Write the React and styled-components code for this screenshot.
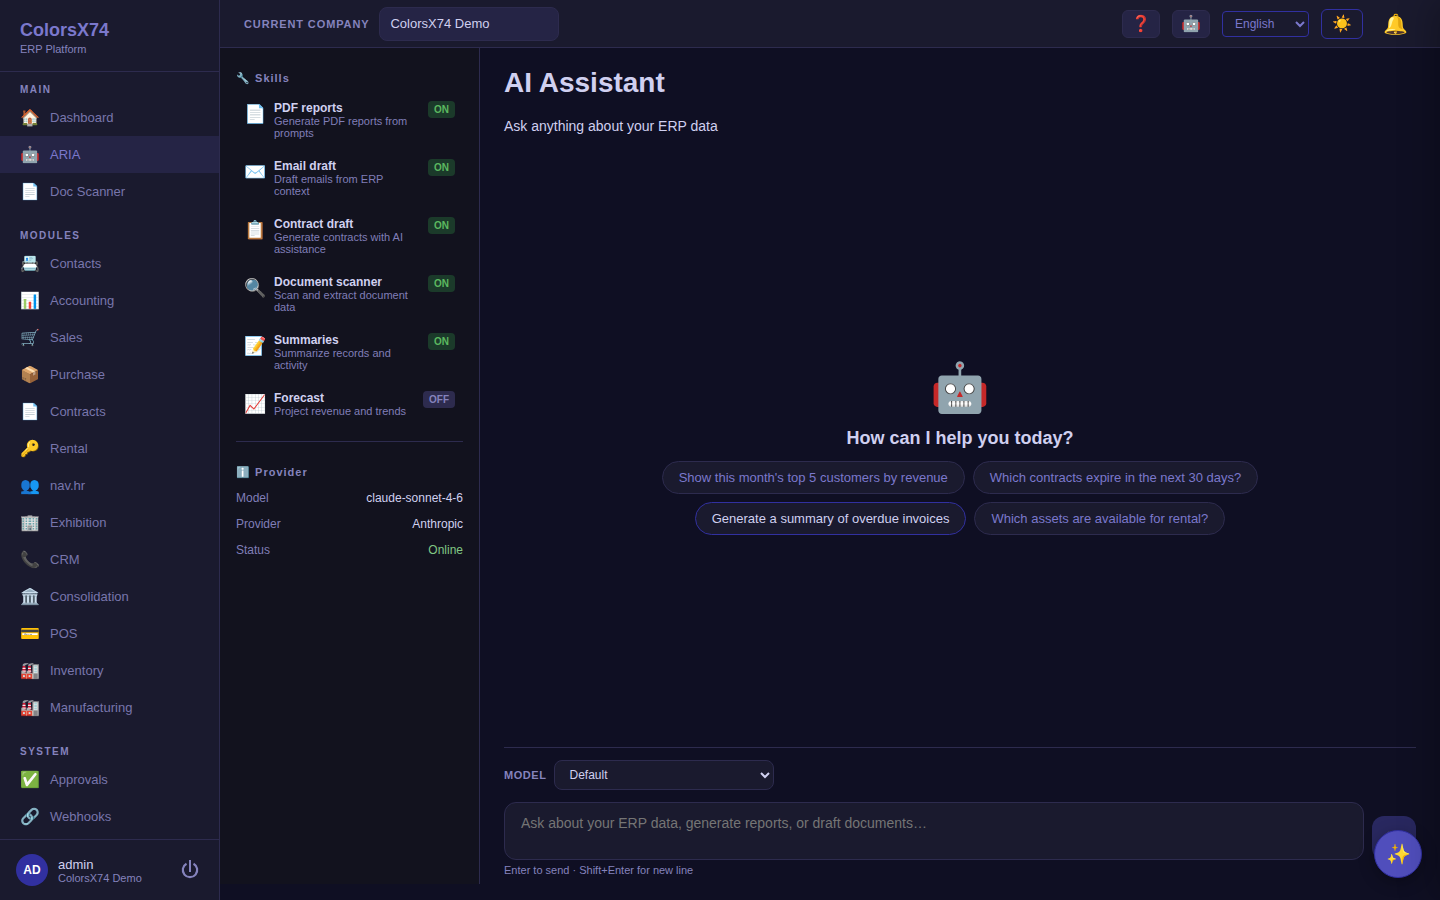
import React, { useState } from 'react';
import styled, { createGlobalStyle } from 'styled-components';
import { SendHorizontal } from 'lucide-react';

const GlobalStyle = createGlobalStyle`
  * {
    box-sizing: border-box;
  }

  body {
    margin: 0;
    background: #0f0f23;
    color: #d0d0f0;
    font-family: 'Liberation Sans', Arial, sans-serif;
    font-size: 14px;
    overflow: hidden;
  }

  button,
  select,
  input,
  textarea {
    font-family: inherit;
  }
`;

const Shell = styled.div`
  display: flex;
  height: 100vh;
  overflow: hidden;
`;

const Sidebar = styled.aside`
  width: 220px;
  flex-shrink: 0;
  display: flex;
  flex-direction: column;
  background: #1a1a2e;
  border-right: 1px solid #2d2b4e;
`;

const Brand = styled.div`
  padding: 20px 20px 16px;
  border-bottom: 1px solid #2d2b4e;
`;

const BrandName = styled.div`
  font-size: 18px;
  line-height: 20px;
  font-weight: 700;
  color: #7b78cc;
`;

const BrandSub = styled.div`
  margin-top: 3px;
  font-size: 11px;
  line-height: 12px;
  color: #8583bd;
`;

const Nav = styled.nav`
  flex: 1;
  min-height: 0;
  overflow: hidden;
`;

const NavGroup = styled.div`
  padding: 12px 0 8px;
`;

const NavHeading = styled.h2`
  margin: 0;
  padding: 0 20px 4px;
  font-size: 10px;
  line-height: 11px;
  font-weight: 700;
  letter-spacing: 0.15em;
  text-transform: uppercase;
  color: #8583bd;
`;

const NavItem = styled.a`
  display: flex;
  align-items: center;
  gap: 10px;
  height: 37px;
  padding: 0 20px;
  font-size: 13px;
  text-decoration: none;
  color: ${props => (props.$active ? '#7b78cc' : '#7876ac')};
  background: ${props => (props.$active ? '#252445' : 'transparent')};
`;

const NavIcon = styled.span`
  width: 20px;
  font-size: 16px;
  text-align: center;
`;

const Account = styled.div`
  display: flex;
  align-items: center;
  gap: 10px;
  height: 61px;
  padding: 0 16px;
  border-top: 1px solid #2d2b4e;
`;

const Avatar = styled.div`
  display: flex;
  align-items: center;
  justify-content: center;
  width: 32px;
  height: 32px;
  border-radius: 50%;
  background: #3130a0;
  color: #fff;
  font-size: 12px;
  font-weight: 700;
`;

const AccountText = styled.div`
  flex: 1;
  font-size: 13px;
  line-height: 15px;
`;

const AccountCompany = styled.div`
  font-size: 11px;
  line-height: 12px;
  color: #8583bd;
`;

const PowerButton = styled.button`
  display: flex;
  padding: 3px;
  border: 0;
  background: none;
  color: #8583bd;
`;

const Page = styled.div`
  flex: 1;
  min-width: 0;
  display: flex;
  flex-direction: column;
`;

const TopBar = styled.header`
  display: flex;
  align-items: center;
  gap: 12px;
  height: 48px;
  flex-shrink: 0;
  padding: 0 24px;
  background: #1a1a2e;
  border-bottom: 1px solid #2d2b4e;
`;

const CompanyLabel = styled.label`
  display: flex;
  align-items: center;
  gap: 10px;
  margin-right: auto;
  font-size: 11px;
  font-weight: 700;
  letter-spacing: 0.08em;
  text-transform: uppercase;
  color: #8583bd;
`;

const CompanyInput = styled.input`
  width: 180px;
  height: 34px;
  padding: 0 10px;
  border: 1px solid #2d2b4e;
  border-radius: 8px;
  background: #252445;
  color: #d0d0f0;
  font-size: 13px;
`;

const ToolButton = styled.button`
  width: 38px;
  height: 28px;
  padding: 0;
  border: 1px solid #2d2b4e;
  border-radius: 6px;
  background: #252445;
  font-size: 16px;
  line-height: 24px;
`;

const ThemeButton = styled(ToolButton)`
  width: 42px;
  height: 30px;
  border-color: #3130a0;
  background: transparent;
`;

const BellButton = styled(ToolButton)`
  border: 0;
  background: none;
  width: 41px;
  font-size: 20px;
`;

const LanguageSelect = styled.select`
  width: 87px;
  height: 26px;
  padding: 0 8px;
  border: 1px solid #3130a0;
  border-radius: 4px;
  background: #1a1a2e;
  color: #7b78cc;
  font-size: 12px;
`;

const Body = styled.div`
  flex: 1;
  min-height: 0;
  display: flex;
`;

const SkillsPanel = styled.aside`
  width: 260px;
  flex-shrink: 0;
  margin-bottom: 16px;
  padding: 24px 16px;
  background: #12121e;
  border-right: 1px solid #2d2b4e;
`;

const PanelTitle = styled.h3`
  margin: 0 0 6px;
  font-size: 11px;
  line-height: 13px;
  font-weight: 700;
  letter-spacing: 1px;
  color: #8583bd;
`;

const SkillList = styled.ul`
  margin: 0;
  padding: 2px 0 0;
  list-style: none;
`;

const Skill = styled.li`
  display: flex;
  align-items: flex-start;
  gap: 8px;
  padding: 8px;
  margin-bottom: 4px;
`;

const SkillIcon = styled.span`
  width: 22px;
  font-size: 18px;
  line-height: 26px;
  text-align: center;
`;

const SkillText = styled.div`
  flex: 1;
  min-width: 0;
  font-size: 11px;
  line-height: 12px;
  color: #807eb8;
`;

const SkillName = styled.div`
  font-size: 12px;
  line-height: 14px;
  font-weight: 700;
  color: #d0d0f0;
`;

const SkillBadge = styled.span`
  padding: 3px 6px;
  border-radius: 4px;
  font-size: 10px;
  line-height: 11px;
  font-weight: 700;
  color: ${props => (props.$on ? '#5cb860' : '#8583bd')};
  background: ${props => (props.$on ? '#1b3a2a' : '#2d2b4e')};
`;

const Divider = styled.hr`
  height: 1px;
  margin: 16px 0 24px;
  border: 0;
  background: #2d2b4e;
`;

const ProviderList = styled.dl`
  margin: 0;
`;

const ProviderRow = styled.div`
  display: flex;
  justify-content: space-between;
  padding: 6px 0;
  font-size: 12px;
  line-height: 14px;
`;

const ProviderKey = styled.dt`
  color: #807eb8;
`;

const ProviderValue = styled.dd`
  margin: 0;
  color: ${props => (props.$online ? '#81c784' : '#d0d0f0')};
`;

const Main = styled.main`
  flex: 1;
  min-width: 0;
  display: flex;
  flex-direction: column;
  padding: 16px 24px 24px;
`;

const Title = styled.h1`
  margin: 0;
  font-size: 28px;
  line-height: 38px;
`;

const Subtitle = styled.p`
  margin: 16px 0 14px;
  line-height: 16px;
`;

const Welcome = styled.section`
  flex: 1;
  display: flex;
  flex-direction: column;
  align-items: center;
  justify-content: center;
`;

const WelcomeIcon = styled.div`
  font-size: 48px;
  line-height: 56px;
`;

const WelcomeTitle = styled.h2`
  margin: 12px 0;
  font-size: 18px;
  line-height: 21px;
`;

const Suggestions = styled.div`
  display: flex;
  flex-wrap: wrap;
  justify-content: center;
  gap: 8px;
  max-width: 600px;
`;

const Suggestion = styled.button`
  height: 33px;
  padding: 0 16px;
  border: 1px solid ${props => (props.$active ? '#3130a0' : '#2d2b4e')};
  border-radius: 20px;
  background: #1a1a2e;
  color: ${props => (props.$active ? '#d0d0f0' : '#7b78cc')};
  font-size: 13px;
`;

const Composer = styled.form`
  padding-top: 12px;
  border-top: 1px solid #2d2b4e;
`;

const ModelLabel = styled.label`
  display: flex;
  align-items: center;
  gap: 8px;
  margin-bottom: 12px;
  font-size: 11px;
  font-weight: 700;
  letter-spacing: 0.05em;
  color: #8583bd;
`;

const ModelSelect = styled.select`
  width: 220px;
  height: 30px;
  padding: 0 10px;
  border: 1px solid #2d2b4e;
  border-radius: 8px;
  background: #1a1a2e;
  color: #d0d0f0;
  font-size: 12px;
`;

const MessageRow = styled.div`
  display: flex;
  align-items: flex-end;
  gap: 8px;
`;

const MessageInput = styled.textarea`
  flex: 1;
  height: 58px;
  padding: 12px 16px;
  border: 1px solid #2d2b4e;
  border-radius: 12px;
  background: #1a1a2e;
  color: #d0d0f0;
  font-size: 14px;
  resize: none;

  &::placeholder {
    color: #757575;
  }
`;

const SendButton = styled.button`
  display: flex;
  align-items: center;
  justify-content: center;
  width: 44px;
  height: 44px;
  padding: 0;
  border: 0;
  border-radius: 12px;
  background: #504ebc;
  color: #fff;
  opacity: 0.4;
`;

const Hint = styled.div`
  margin-top: 4px;
  font-size: 11px;
  line-height: 12px;
  color: #8583bd;
`;

const AssistButton = styled.button`
  position: fixed;
  right: 18px;
  bottom: 22px;
  width: 48px;
  height: 48px;
  padding: 0;
  border: 1px solid #3130a0;
  border-radius: 50%;
  background: #504ebc;
  font-size: 20px;
  box-shadow: 0 4px 16px rgba(0, 0, 0, 0.3);
`;

// closed drawer, only its shadow reaches the page
const Drawer = styled.div`
  position: fixed;
  top: 0;
  bottom: 0;
  left: 100%;
  width: 380px;
  box-shadow: -8px 0 32px rgba(0, 0, 0, 0.25);
  pointer-events: none;
`;

const navGroups = [
  {
    title: 'Main',
    items: [
      ['🏠', 'Dashboard'],
      ['🤖', 'ARIA'],
      ['📄', 'Doc Scanner'],
    ],
  },
  {
    title: 'Modules',
    items: [
      ['📇', 'Contacts'],
      ['📊', 'Accounting'],
      ['🛒', 'Sales'],
      ['📦', 'Purchase'],
      ['📄', 'Contracts'],
      ['🔑', 'Rental'],
      ['👥', 'nav.hr'],
      ['🏢', 'Exhibition'],
      ['📞', 'CRM'],
      ['🏛️', 'Consolidation'],
      ['💳', 'POS'],
      ['🏭', 'Inventory'],
      ['🏭', 'Manufacturing'],
    ],
  },
  {
    title: 'System',
    items: [
      ['✅', 'Approvals'],
      ['🔗', 'Webhooks'],
    ],
  },
];

const skills = [
  { icon: '📄', name: 'PDF reports', text: 'Generate PDF reports from prompts', on: true },
  { icon: '✉️', name: 'Email draft', text: 'Draft emails from ERP context', on: true },
  { icon: '📋', name: 'Contract draft', text: 'Generate contracts with AI assistance', on: true },
  { icon: '🔍', name: 'Document scanner', text: 'Scan and extract document data', on: true },
  { icon: '📝', name: 'Summaries', text: 'Summarize records and activity', on: true },
  { icon: '📈', name: 'Forecast', text: 'Project revenue and trends', on: false },
];

const suggestions = [
  "Show this month's top 5 customers by revenue",
  'Which contracts expire in the next 30 days?',
  'Generate a summary of overdue invoices',
  'Which assets are available for rental?',
];

const PowerIcon = () => (
  <svg width="20" height="20" viewBox="0 0 20 20" fill="none" stroke="currentColor">
    <path d="M10 0v12" strokeWidth="2" />
    <path d="M6.5 3.7a7.2 7.2 0 1 0 7 0" strokeWidth="2.2" />
  </svg>
);

const SideNav = () => (
  <Sidebar>
    <Brand>
      <BrandName>ColorsX74</BrandName>
      <BrandSub>ERP Platform</BrandSub>
    </Brand>
    <Nav>
      {navGroups.map(group => (
        <NavGroup key={group.title}>
          <NavHeading>{group.title}</NavHeading>
          {group.items.map(([icon, label]) => (
            <NavItem key={label} href="#" $active={label === 'ARIA'}>
              <NavIcon>{icon}</NavIcon>
              {label}
            </NavItem>
          ))}
        </NavGroup>
      ))}
    </Nav>
    <Account>
      <Avatar>AD</Avatar>
      <AccountText>
        admin
        <AccountCompany>ColorsX74 Demo</AccountCompany>
      </AccountText>
      <PowerButton aria-label="Log out">
        <PowerIcon />
      </PowerButton>
    </Account>
  </Sidebar>
);

const Header = () => (
  <TopBar>
    <CompanyLabel>
      Current company
      <CompanyInput defaultValue="ColorsX74 Demo" />
    </CompanyLabel>
    <ToolButton aria-label="Help">❓</ToolButton>
    <ToolButton aria-label="Assistant">🤖</ToolButton>
    <LanguageSelect aria-label="Language">
      <option>English</option>
    </LanguageSelect>
    <ThemeButton aria-label="Light theme">☀️</ThemeButton>
    <BellButton aria-label="Notifications">🔔</BellButton>
  </TopBar>
);

const Skills = () => (
  <SkillsPanel>
    <PanelTitle>🔧 Skills</PanelTitle>
    <SkillList>
      {skills.map(skill => (
        <Skill key={skill.name}>
          <SkillIcon>{skill.icon}</SkillIcon>
          <SkillText>
            <SkillName>{skill.name}</SkillName>
            {skill.text}
          </SkillText>
          <SkillBadge $on={skill.on}>{skill.on ? 'ON' : 'OFF'}</SkillBadge>
        </Skill>
      ))}
    </SkillList>
    <Divider />
    <PanelTitle>ℹ️ Provider</PanelTitle>
    <ProviderList>
      <ProviderRow>
        <ProviderKey>Model</ProviderKey>
        <ProviderValue>claude-sonnet-4-6</ProviderValue>
      </ProviderRow>
      <ProviderRow>
        <ProviderKey>Provider</ProviderKey>
        <ProviderValue>Anthropic</ProviderValue>
      </ProviderRow>
      <ProviderRow>
        <ProviderKey>Status</ProviderKey>
        <ProviderValue $online>Online</ProviderValue>
      </ProviderRow>
    </ProviderList>
  </SkillsPanel>
);

const Chat = () => {
  const [message, setMessage] = useState('');

  return (
    <Main>
      <Title>AI Assistant</Title>
      <Subtitle>Ask anything about your ERP data</Subtitle>
      <Welcome>
        <WelcomeIcon>🤖</WelcomeIcon>
        <WelcomeTitle>How can I help you today?</WelcomeTitle>
        <Suggestions>
          {suggestions.map((text, i) => (
            <Suggestion key={text} $active={i === 2} onClick={() => setMessage(text)}>
              {text}
            </Suggestion>
          ))}
        </Suggestions>
      </Welcome>
      <Composer onSubmit={event => event.preventDefault()}>
        <ModelLabel>
          MODEL
          <ModelSelect>
            <option>Default</option>
          </ModelSelect>
        </ModelLabel>
        <MessageRow>
          <MessageInput
            aria-label="Message"
            value={message}
            onChange={event => setMessage(event.target.value)}
            placeholder="Ask about your ERP data, generate reports, or draft documents…"
          />
          <SendButton aria-label="Send">
            <SendHorizontal size={16} strokeWidth={1} />
          </SendButton>
        </MessageRow>
        <Hint>Enter to send · Shift+Enter for new line</Hint>
      </Composer>
    </Main>
  );
};

export default function App() {
  return (
    <>
      <GlobalStyle />
      <Shell>
        <SideNav />
        <Page>
          <Header />
          <Body>
            <Skills />
            <Chat />
          </Body>
        </Page>
      </Shell>
      <AssistButton aria-label="Open assistant">✨</AssistButton>
      <Drawer />
    </>
  );
}
